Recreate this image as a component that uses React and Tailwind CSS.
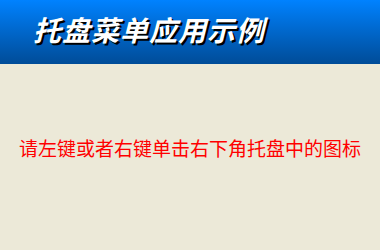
export default function App() {
    return (
        <div className="w-[380px] h-[250px] flex flex-col bg-[#ece9d8] font-['Liberation_Sans','Noto_Sans_CJK_SC',sans-serif]">
            {/* header bar */}
            <div className="h-[64px] flex items-center pl-[33px] bg-gradient-to-b from-[#0082ff] to-[#004c98]">
                <h1 className="text-[28px] leading-none font-bold italic text-white tracking-[1px] [text-shadow:2px_2px_0_#000]">
                    托盘菜单应用示例
                </h1>
            </div>
            <div className="flex-1 flex items-center justify-center pb-[16px]">
                <p className="text-[19px] leading-none text-[#f00]">请左键或者右键单击右下角托盘中的图标</p>
            </div>
        </div>
    );
}
